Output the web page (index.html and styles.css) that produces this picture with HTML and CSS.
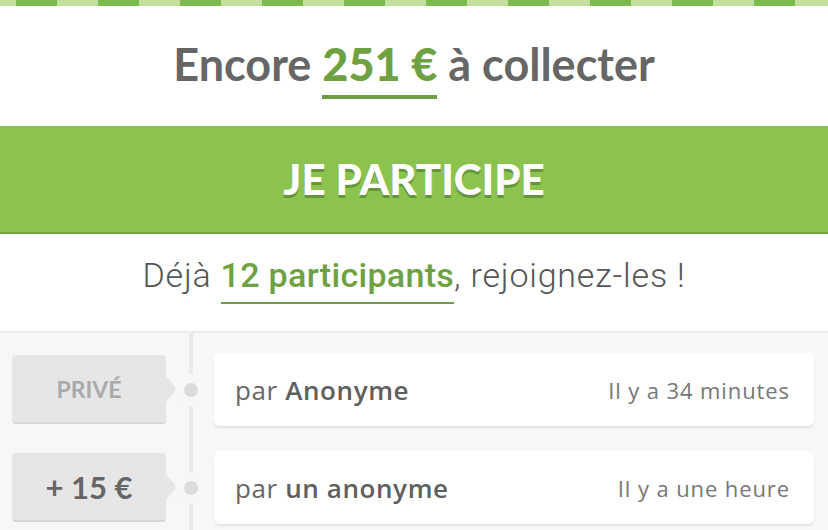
FILE: index.html
```html
<!DOCTYPE html>
<html lang="fr">
<head>
    <meta charset="UTF-8">
    <meta name="viewport" content="width=device-width, initial-scale=1.0">
    <title>Cagnotte</title>
    <link rel="stylesheet" href="styles.css">
</head>
<body>
    <div class="stripe"></div>

    <div class="goal">
        <h2>Encore <span class="amount">251 €</span> à collecter</h2>
    </div>

    <button class="cta">JE PARTICIPE</button>

    <div class="count">
        <p>Déjà <span class="people">12 participants</span>, rejoignez-les !</p>
    </div>

    <div class="timeline">
        <div class="row">
            <div class="badge private">PRIVÉ</div>
            <div class="node"><span class="dot"></span></div>
            <div class="card">
                <span class="who">par <b>Anonyme</b></span>
                <span class="when">Il y a 34 minutes</span>
            </div>
        </div>
        <div class="row">
            <div class="badge">+ 15 €</div>
            <div class="node"><span class="dot"></span></div>
            <div class="card">
                <span class="who">par <b>un anonyme</b></span>
                <span class="when">Il y a une heure</span>
            </div>
        </div>
    </div>
</body>
</html>
```

FILE: styles.css
```css
body {
    font-family: Lato, "Open Sans", Arial, sans-serif;
    background-color: #fff;
    color: #666;
    margin: 0;
    width: 828px;
    height: 530px;
    overflow: hidden;
}

.stripe {
    height: 6px;
    background: repeating-linear-gradient(90deg, #c2e09c 0 41px, #7cb94f 41px 82px);
    background-position: -25px 0;
}

.goal {
    height: 120px;
    display: flex;
    justify-content: center;
}

.goal h2 {
    margin: 0;
    padding-top: 31px;
    font-size: 45px;
    font-weight: 700;
    line-height: 54px;
    color: #666;
}

.amount {
    color: #6ea142;
    font-weight: 900;
    display: inline-block;
    border-bottom: 4px solid #6e9d47;
    padding-bottom: 6px;
    line-height: 50px;
}

.cta {
    display: block;
    width: 100%;
    height: 108px;
    margin: 0;
    padding: 0;
    border: none;
    border-bottom: 2px solid #73a644;
    background-color: #8bc34e;
    color: #fff;
    font-family: Lato, Arial, sans-serif;
    font-size: 42px;
    font-weight: 900;
    text-shadow: 0 3px 0 #65953b;
    cursor: pointer;
}

.count {
    height: 97px;
    display: flex;
    justify-content: center;
}

.count p {
    margin: 0;
    padding-top: 20px;
    font-family: Roboto, "Open Sans", sans-serif;
    font-size: 34px;
    font-weight: 300;
    color: #555;
    line-height: 42px;
    letter-spacing: 0.8px;
}

.people {
    color: #6ea142;
    font-weight: 500;
    display: inline-block;
    border-bottom: 2px solid #6e9d47;
    padding-bottom: 6px;
    letter-spacing: 0.3px;
}

.timeline {
    position: relative;
    background-color: #f7f7f7;
    border-top: 2px solid #ececec;
    padding: 20px 14px 0 12px;
    display: flex;
    flex-direction: column;
    gap: 25px;
    height: 200px;
}

.timeline::before {
    content: "";
    position: absolute;
    left: 189px;
    top: 0;
    bottom: 0;
    width: 4px;
    background-color: #eaeaea;
}

.row {
    display: grid;
    grid-template-columns: 154px 48px 1fr;
    align-items: center;
}

.badge {
    position: relative;
    height: 67px;
    border-bottom: 2px solid #d6d6d6;
    border-radius: 4px;
    background-color: #e6e6e6;
    display: flex;
    align-items: center;
    justify-content: center;
    font-size: 31px;
    font-weight: 700;
    color: #666;
}

.badge::after {
    content: "";
    position: absolute;
    right: -11px;
    top: 50%;
    margin-top: -13px;
    border-left: 11px solid #e6e6e6;
    border-top: 13px solid transparent;
    border-bottom: 13px solid transparent;
}

.badge.private {
    font-size: 23px;
    color: #aaa;
}

.node {
    display: flex;
    justify-content: center;
    position: relative;
    left: 1px;
}

.dot {
    width: 14px;
    height: 14px;
    border-radius: 50%;
    background-color: #dbdbdb;
    border: 9px solid #f7f7f7;
}

.card {
    height: 73px;
    background-color: #fff;
    border-radius: 6px;
    box-shadow: 0 2px 2px rgba(0, 0, 0, 0.08);
    display: flex;
    align-items: center;
    justify-content: space-between;
    padding: 0 24px 0 21px;
    font-family: "Open Sans", Lato, sans-serif;
}

.who {
    font-size: 26px;
    color: #666;
    letter-spacing: 0.6px;
}

.who b {
    font-weight: 600;
    color: #5f5f5f;
}

.when {
    font-size: 22px;
    font-weight: 400;
    color: #777;
    letter-spacing: 0.9px;
}
```
